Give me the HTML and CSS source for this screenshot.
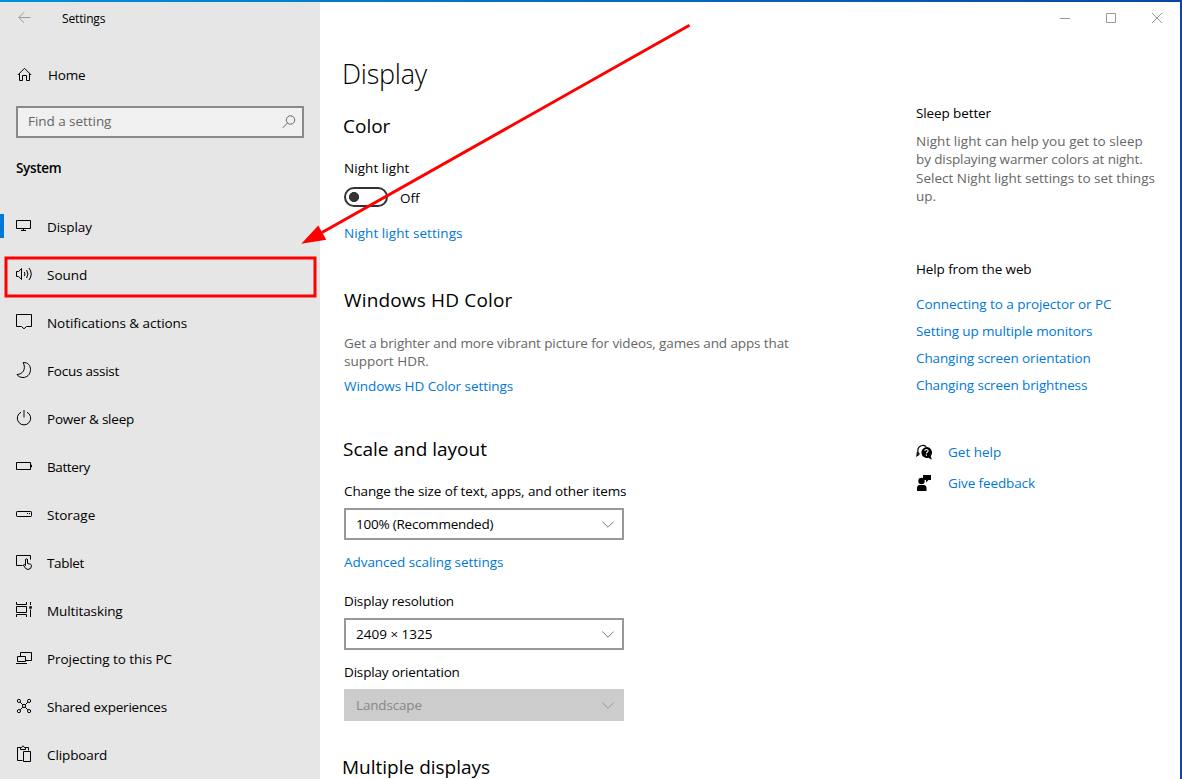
FILE: index.html
```html
<!DOCTYPE html>
<html lang="en">
<head>
<meta charset="utf-8">
<title>Settings</title>
<link rel="stylesheet" href="styles.css">
</head>
<body>
<div class="window">
  <aside class="sidebar">
    <div class="titlebar">
      <svg class="back" width="14" height="12" viewBox="0 0 14 12"><path d="M6 .300 .8 5.500 6 10.700M1 5.500h11.500"/></svg>
      <span class="t-title">Settings</span>
    </div>
    <div class="home">
      <svg class="icon" width="16" height="16" viewBox="0 0 16 16"><path d="M.8 8 7.500 1.300 14.200 8M2.500 6.500v7h3v-5h4v5h3v-7"/></svg>
      <span class="t-home">Home</span>
    </div>
    <div class="search">
      <span class="t-find">Find a setting</span>
      <svg class="lens" width="14" height="14" viewBox="0 0 14 14"><circle cx="8.500" cy="5" r="4.200"/><path d="M5.500 8 .8 12.800"/></svg>
    </div>
    <h2 class="group t-system">System</h2>
    <nav class="nav">
      <a class="item active"><svg class="icon" width="18" height="18" viewBox="0 0 18 18"><path d="M.5 3.500h14v8H.5zM7.500 11.500v2M5 13.500h5"/></svg><span class="t-display">Display</span></a>
      <a class="item"><svg class="icon" width="18" height="18" viewBox="0 0 18 18"><path d="M.5 6.500h2.200l2.800-3v11l-2.800-3H.5zM8.300 7q1.400 2 0 4M10.600 5q2.700 4 0 8M13 3q4.500 6 0 12"/></svg><span class="t-sound">Sound</span></a>
      <a class="item"><svg class="icon" width="18" height="18" viewBox="0 0 18 18"><path d="M.5 1.500h15v12h-5l-2.500 2.300-2.500-2.300H.5z"/></svg><span class="t-notif">Notifications &amp; actions</span></a>
      <a class="item"><svg class="icon" width="18" height="18" viewBox="0 0 18 18"><path d="M7.200 1.500C12 1.300 14.500 4.500 14.500 8.500c0 5.500-4 8-7.500 8-2.800 0-5-1.200-6-3 5.500-.2 9.500-5 6.200-12z"/></svg><span class="t-focus">Focus assist</span></a>
      <a class="item"><svg class="icon" width="18" height="18" viewBox="0 0 18 18"><path d="M5 3.200a6.700 6.700 0 1 0 6 0"/><path class="thick" d="M8 1v7.500"/></svg><span class="t-power">Power &amp; sleep</span></a>
      <a class="item"><svg class="icon" width="18" height="18" viewBox="0 0 18 18"><path d="M.5 5.500h14v7H.5zM15.500 7.800v2.400"/></svg><span class="t-battery">Battery</span></a>
      <a class="item"><svg class="icon" width="18" height="18" viewBox="0 0 18 18"><rect x=".5" y="6.500" width="15" height="5" rx=".7"/><path d="M11 8.500h1M13 8.500h1"/></svg><span class="t-storage">Storage</span></a>
      <a class="item"><svg class="icon" width="18" height="18" viewBox="0 0 18 18"><path d="M6.500 12.500h-6v-10h14v4"/><path d="M9.500 12.500V7q0-1.300 1-1.300t1 1.300v3.500l3 .7q1 .3 1 1.500 0 3.600-3.500 3.800-2.500 0-4.700-4.500 1-1.200 2.200.5z"/></svg><span class="t-tablet">Tablet</span></a>
      <a class="item"><svg class="icon" width="18" height="18" viewBox="0 0 18 18"><path d="M.5 1v2.500h10V1M.5 5.500h10v6H.5zM.5 16v-2.500h10V16M14.500 1v3M14.500 8.500V16"/><rect class="solid" x="13.300" y="5.200" width="2.500" height="2.500"/></svg><span class="t-multi">Multitasking</span></a>
      <a class="item"><svg class="icon" width="18" height="18" viewBox="0 0 18 18"><path d="M4.500 7V3.500h11v8H10M1.500 7.500h8v5h-8zM0 14.500h11"/></svg><span class="t-project">Projecting to this PC</span></a>
      <a class="item"><svg class="icon" width="18" height="18" viewBox="0 0 18 18"><circle cx="2.900" cy="3.900" r="1.600"/><circle cx="13.100" cy="3.900" r="1.600"/><circle cx="2.900" cy="14.100" r="1.600"/><circle cx="13.100" cy="14.100" r="1.600"/><circle cx="8" cy="9" r="1.600"/><path d="m4.100 5.100 2.700 2.700M11.900 5.100 9.200 7.800M4.100 12.900l2.700-2.700M11.900 12.900 9.200 10.200"/></svg><span class="t-shared">Shared experiences</span></a>
      <a class="item"><svg class="icon" width="18" height="18" viewBox="0 0 18 18"><path d="M6.500 15.500h-5v-13h3M9.500 2.500h3v3M4.500 4.500v-2h1.200q.3-1.500 1.300-1.500t1.300 1.500h1.200v2zM7.500 6.500h7v10h-7z"/></svg><span class="t-clip">Clipboard</span></a>
    </nav>
  </aside>

  <main class="content">
    <h1 class="t-h1">Display</h1>
    <h2 class="t-color">Color</h2>
    <p class="label t-night">Night light</p>
    <div class="toggle-row"><span class="toggle"></span><span class="t-off">Off</span></div>
    <a class="link after-toggle t-nls">Night light settings</a>
    <h2 class="hd t-hd">Windows HD Color</h2>
    <p class="desc"><span class="t-hd1">Get a brighter and more vibrant picture for videos, games and apps that</span><br><span class="t-hd2">support HDR.</span></p>
    <a class="link after-desc t-hdl">Windows HD Color settings</a>
    <h2 class="scale t-scale">Scale and layout</h2>
    <p class="label t-change">Change the size of text, apps, and other items</p>
    <div class="select"><span class="t-100">100% (Recommended)</span><svg width="12" height="7" viewBox="0 0 12 7"><path d="m.3.500 5.700 5.700L11.700.5"/></svg></div>
    <a class="link after-select t-adv">Advanced scaling settings</a>
    <p class="label resolution t-res">Display resolution</p>
    <div class="select"><span class="t-2409">2409 × 1325</span><svg width="12" height="7" viewBox="0 0 12 7"><path d="m.3.500 5.700 5.700L11.700.5"/></svg></div>
    <p class="label orientation t-ori">Display orientation</p>
    <div class="select disabled"><span class="t-land">Landscape</span><svg width="12" height="7" viewBox="0 0 12 7"><path d="m.3.500 5.700 5.700L11.700.5"/></svg></div>
    <h2 class="multiple t-mult">Multiple displays</h2>
  </main>

  <aside class="related">
    <div class="controls">
      <svg width="12" height="12" viewBox="0 0 12 12"><path d="M1 6.500h10"/></svg>
      <svg width="12" height="12" viewBox="0 0 12 12"><path d="M1.500 1.500h9v9h-9z"/></svg>
      <svg width="12" height="12" viewBox="0 0 12 12"><path d="m1 1 10 10M11 1 1 11"/></svg>
    </div>
    <h3 class="t-sleep">Sleep better</h3>
    <p class="tip"><span class="t-s1">Night light can help you get to sleep</span><br><span class="t-s2">by displaying warmer colors at night.</span><br><span class="t-s3">Select Night light settings to set things</span><br><span class="t-s4">up.</span></p>
    <h3 class="web t-web">Help from the web</h3>
    <div class="links">
      <a class="t-l1">Connecting to a projector or PC</a>
      <a class="t-l2">Setting up multiple monitors</a>
      <a class="t-l3">Changing screen orientation</a>
      <a class="t-l4">Changing screen brightness</a>
    </div>
    <div class="support">
      <a><svg width="16" height="16" viewBox="0 0 16 16"><path class="bubble" d="M3.400 10.200A5 5 0 1 1 10.200 2.800M3.400 10.200.9 11.800l.5-3.800"/><path d="M10.400 3a5.500 5.500 0 0 1 4.300 9l1.100 3.800-3.500-2A5.500 5.500 0 1 1 10.400 3z"/><path class="mark" d="M8.800 6.900q.2-1.400 1.700-1.400t1.600 1.300q0 .8-.9 1.400t-.8 1.300M10.400 10.600v1.200"/></svg><span class="t-get">Get help</span></a>
      <a><svg width="16" height="16" viewBox="0 0 16 16"><path d="M7 0h8v5h-2.500L10 7.500V5H7z"/><circle cx="5.500" cy="6" r="3.200"/><path d="M1 16v-3q0-3 3-3h3.500q3 0 3 3v3z"/></svg><span class="t-give">Give feedback</span></a>
    </div>
  </aside>
</div>
<svg class="annotation" width="1182" height="779" viewBox="0 0 1182 779"><rect class="frame" x="6" y="258" width="309" height="38"/><path class="shaft" d="M689.500 25.300 322 232.500"/><path class="head" d="m301.300 243.800 17-18.300 8 14.200z"/></svg>
</body>
</html>
```
FILE: styles.css
```css
* { box-sizing: border-box; margin: 0; padding: 0; }
body {
  position: relative;
  width: 1182px;
  height: 779px;
  overflow: hidden;
  background: #fff;
  color: #000;
  font-family: "Open Sans", "Noto Sans", sans-serif;
  font-size: 13.5px;
  line-height: 20px;
}
span, a, h1, h2, h3, .label { white-space: nowrap; }
svg { flex: none; fill: none; stroke: #000; stroke-width: 1; }
.window {
  display: grid;
  grid-template-columns: 320px 596px 264px;
  height: 779px;
  overflow: hidden;
  border-top: 2px solid #0a78d0;
  border-right: 2px solid #0b4aa6;
  border-image: linear-gradient(90deg, #0091dc, #0a46a5) 2;
}
.sidebar { background: #e6e6e6; }
.titlebar { display: flex; height: 33px; padding-left: 18px; }
.titlebar span { font-size: 12px; line-height: 34px; letter-spacing: -.15px; }
.titlebar .back { margin: 10px 30px 0 0; stroke: #999; }
.home { display: flex; align-items: center; gap: 15px; height: 20px; margin-top: 30px; padding-left: 17px; }
.search {
  display: flex;
  align-items: center;
  justify-content: space-between;
  width: 288px;
  height: 32px;
  margin: 21px 0 0 16px;
  padding: 0 6px 2px 10px;
  border: 2px solid #8a8a8a;
  background: #f0f0f0;
  color: #666;
}
.lens { stroke: #666; margin-top: 2px; }
.group { height: 20px; margin: 20px 0 0 16px; font-size: 13.5px; font-weight: 600; }
.nav { margin-top: 25px; }
.item { display: flex; align-items: center; gap: 13px; height: 48px; padding-left: 16px; }
.item .icon { margin-top: -2px; }
.active { background: linear-gradient(#0078d7, #0078d7) 0 11px / 4px 24px no-repeat; }
.solid { fill: #000; stroke: none; }
.thick { stroke: #777; stroke-width: 2; }
.content { padding: 54px 0 0 24px; overflow: hidden; }
h1 { height: 36px; margin-left: -2px; font-size: 27px; font-weight: 350; line-height: 36px; letter-spacing: -.25px; }
h2 { font-weight: 400; }
.content h2 { height: 28px; margin-left: -1px; font-size: 19px; line-height: 28px; }
.content .t-color { margin-top: 20px; }
.label, .link { display: block; height: 20px; }
.t-night { margin-top: 18px; }
.toggle-row { display: flex; align-items: center; gap: 12px; height: 20px; margin-top: 9px; }
.toggle {
  width: 44px;
  height: 20px;
  border: 2px solid #333;
  border-radius: 10px;
  background: radial-gradient(circle at 8px 8px, #333 4.700px, transparent 5.300px);
}
.t-off { margin-top: 2px; }
.link, .links, .support { color: #0078d7; }
.after-toggle { margin-top: 16px; }
.content .hd { margin-top: 43px; margin-left: 0; }
.desc { height: 37px; margin-top: 20px; line-height: 18.400px; color: #666; }
.after-desc { margin-top: 5px; }
.content .scale { margin-top: 39px; }
.t-change { margin-top: 18px; }
.select {
  display: flex;
  align-items: center;
  justify-content: space-between;
  width: 280px;
  height: 32px;
  margin-top: 7px;
  padding: 0 8px 0 10px;
  border: 2px solid #999;
}
.select svg { stroke: #777; }
.disabled { border-color: #ccc; background: #ccc; color: #888; }
.disabled svg { stroke: #999; }
.after-select { margin-top: 12px; }
.resolution { margin-top: 19px; }
.orientation { margin-top: 12px; }
.content .multiple { margin-top: 32px; margin-left: -2px; }
.controls { display: flex; gap: 34px; height: 12px; margin: 10px 0 79px 143px; }
.controls svg { stroke: #999; }
h3 { height: 20px; font-size: 13.5px; font-weight: 400; }
.tip { height: 74px; margin-top: 9px; color: #666; line-height: 18.400px; }
.web { margin-top: 53px; }
.links { display: grid; grid-auto-rows: 27px; margin-top: 12px; line-height: 27px; }
.support { display: grid; grid-auto-rows: 31px; margin-top: 38px; line-height: 31px; }
.support a { display: flex; align-items: center; gap: 16px; }
.support svg { margin-top: -1px; fill: #000; stroke: none; }
.support .bubble { fill: none; stroke: #000; stroke-width: 1.200; }
.support .mark { fill: none; stroke: #fff; stroke-width: 1.200; }

/* Tracking adjustments */
.t-home, .t-100, .t-shared, .t-power, .t-focus { letter-spacing: -.22px; }
.t-system, .t-tablet { letter-spacing: -.33px; }
.t-battery { letter-spacing: -.4px; }
.t-find, .t-notif, .t-project, .t-adv, .t-hdl, .t-l1 { letter-spacing: -.05px; }
.t-display, .t-multi, .t-clip, .t-sleep, .t-s2, .t-web, .t-l2, .t-l3, .t-l4, .t-hd1, .t-change, .t-give { letter-spacing: -.11px; }
.t-res, .t-ori, .t-land { letter-spacing: -.17px; }
.t-night, .t-nls, .t-s1 { letter-spacing: .06px; }
.t-hd { letter-spacing: .16px; }

.annotation { position: absolute; left: 0; top: 0; pointer-events: none; }
.frame, .shaft { stroke: #f00; stroke-width: 3; }
.head { fill: #f00; stroke: none; }
```
